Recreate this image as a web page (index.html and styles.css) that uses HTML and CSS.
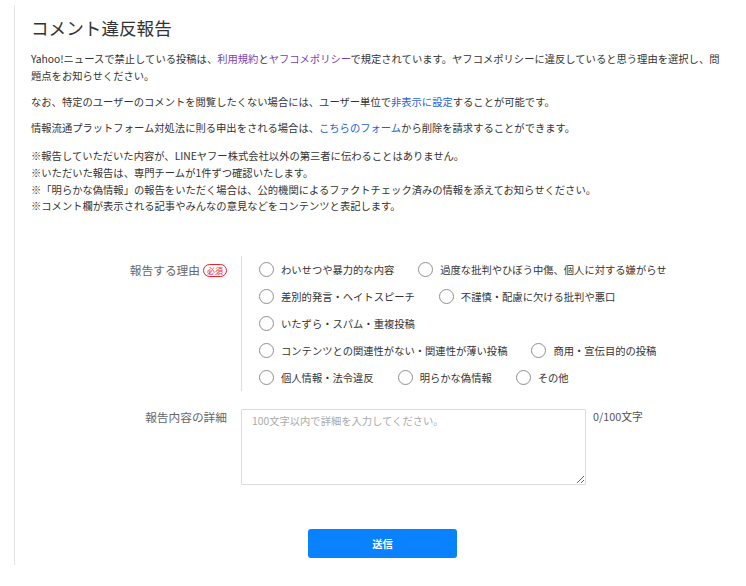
FILE: index.html
```html
<!DOCTYPE html>
<html lang="ja">
<head>
<meta charset="utf-8">
<title>コメント違反報告</title>
<link rel="stylesheet" href="styles.css">
</head>
<body>
<div class="page">
  <h1 class="title">コメント違反報告</h1>
  <p class="para">Yahoo!ニュースで禁止している投稿は、<a class="visited" href="#">利用規約</a>と<a class="visited" href="#">ヤフコメポリシー</a>で規定されています。ヤフコメポリシーに違反していると思う理由を選択し、問題点をお知らせください。</p>
  <p class="para">なお、特定のユーザーのコメントを閲覧したくない場合には、ユーザー単位で<a class="link" href="#">非表示に設定</a>することが可能です。</p>
  <p class="para">情報流通プラットフォーム対処法に則る申出をされる場合は、<a class="link" href="#">こちらのフォーム</a>から削除を請求することができます。</p>
  <div class="notes">
    <p>※報告していただいた内容が、LINEヤフー株式会社以外の第三者に伝わることはありません。</p>
    <p>※いただいた報告は、専門チームが1件ずつ確認いたします。</p>
    <p>※「明らかな偽情報」の報告をいただく場合は、公的機関によるファクトチェック済みの情報を添えてお知らせください。</p>
    <p>※コメント欄が表示される記事やみんなの意見などをコンテンツと表記します。</p>
  </div>

  <form class="form">
    <div class="row">
      <div class="label">報告する理由<span class="badge">必須</span></div>
      <div class="options">
        <label class="opt"><span class="radio"></span>わいせつや暴力的な内容</label>
        <label class="opt"><span class="radio"></span>過度な批判やひぼう中傷、個人に対する嫌がらせ</label>
        <label class="opt"><span class="radio"></span>差別的発言・ヘイトスピーチ</label>
        <label class="opt"><span class="radio"></span>不謹慎・配慮に欠ける批判や悪口</label>
        <label class="opt"><span class="radio"></span>いたずら・スパム・重複投稿</label>
        <label class="opt"><span class="radio"></span>コンテンツとの関連性がない・関連性が薄い投稿</label>
        <label class="opt"><span class="radio"></span>商用・宣伝目的の投稿</label>
        <label class="opt"><span class="radio"></span>個人情報・法令違反</label>
        <label class="opt"><span class="radio"></span>明らかな偽情報</label>
        <label class="opt"><span class="radio"></span>その他</label>
      </div>
    </div>
    <div class="row row-detail">
      <div class="label label-detail">報告内容の詳細</div>
      <div class="detail">
        <textarea class="textarea" placeholder="100文字以内で詳細を入力してください。"></textarea>
        <span class="count">0/100文字</span>
      </div>
    </div>
    <div class="submit-wrap">
      <button type="button" class="submit">送信</button>
    </div>
  </form>
</div>
</body>
</html>
```

FILE: styles.css
```css
html, body {
  margin: 0;
  padding: 0;
  background: #fff;
}
body {
  font-family: "Noto Sans CJK JP", "Noto Sans", sans-serif;
  color: #333;
  font-size: 10.3px;
}
.page {
  box-sizing: border-box;
  margin: 5px 0 0 14px;
  height: 560px;
  border-left: 1px solid #e3e3e3;
  padding: 10px 18px 0 16px;
}
.title {
  margin: 0;
  font-size: 17.6px;
  font-weight: normal;
  line-height: 26px;
  color: #333;
}
.para {
  margin: 9px 0 0;
  line-height: 17px;
}
.visited { color: #7a3fb8; text-decoration: none; }
.link { color: #1d5fd6; text-decoration: none; }
.notes {
  margin-top: 12px;
}
.notes p {
  margin: 0;
  line-height: 16.8px;
}
.form {
  margin-top: 41px;
}
.row {
  display: grid;
  grid-template-columns: 196px 1fr;
  column-gap: 14px;
}
.label {
  text-align: right;
  color: #666;
  line-height: 27px;
  font-size: 11.7px;
  white-space: nowrap;
}
.badge {
  display: inline-block;
  margin-left: 3px;
  padding: 0 3px;
  border: 1px solid #e8202b;
  border-radius: 7px;
  color: #e8202b;
  font-size: 8px;
  line-height: 11px;
  vertical-align: 1px;
}
.options {
  border-left: 1px solid #dcdcdc;
  padding-left: 17px;
  display: flex;
  flex-wrap: wrap;
  align-content: flex-start;
  width: 440px;
}
.opt {
  display: inline-flex;
  align-items: center;
  height: 27px;
  margin-right: 24px;
  color: #333;
  white-space: nowrap;
}
.radio {
  box-sizing: border-box;
  width: 15px;
  height: 15px;
  border: 1px solid #8f8f8f;
  border-radius: 50%;
  background: #fff;
  margin-right: 7px;
  flex: none;
}
.row-detail {
  margin-top: 18px;
}
.label-detail {
  line-height: 15px;
}
.detail {
  display: flex;
  align-items: flex-start;
}
.textarea {
  box-sizing: border-box;
  width: 345px;
  height: 76px;
  border: 1px solid #dcdcdc;
  border-radius: 1px;
  padding: 4px 10px;
  font-family: "Noto Sans CJK JP", "Noto Sans", sans-serif;
  font-size: 10.3px;
  line-height: 14px;
  color: #333;
  margin: 0;
  resize: vertical;
}
.textarea::placeholder {
  color: #aaa;
}
.count {
  margin-left: 7px;
  line-height: 15px;
  font-size: 10.8px;
  color: #555;
}
.submit-wrap {
  display: flex;
  justify-content: center;
  padding-left: 6px;
  margin-top: 44px;
}
.submit {
  width: 149px;
  height: 29px;
  border: none;
  border-radius: 3px;
  background: #0a82ff;
  color: #fff;
  font-family: "Noto Sans CJK JP", "Noto Sans", sans-serif;
  font-weight: bold;
  font-size: 10.3px;
  cursor: pointer;
}
```
